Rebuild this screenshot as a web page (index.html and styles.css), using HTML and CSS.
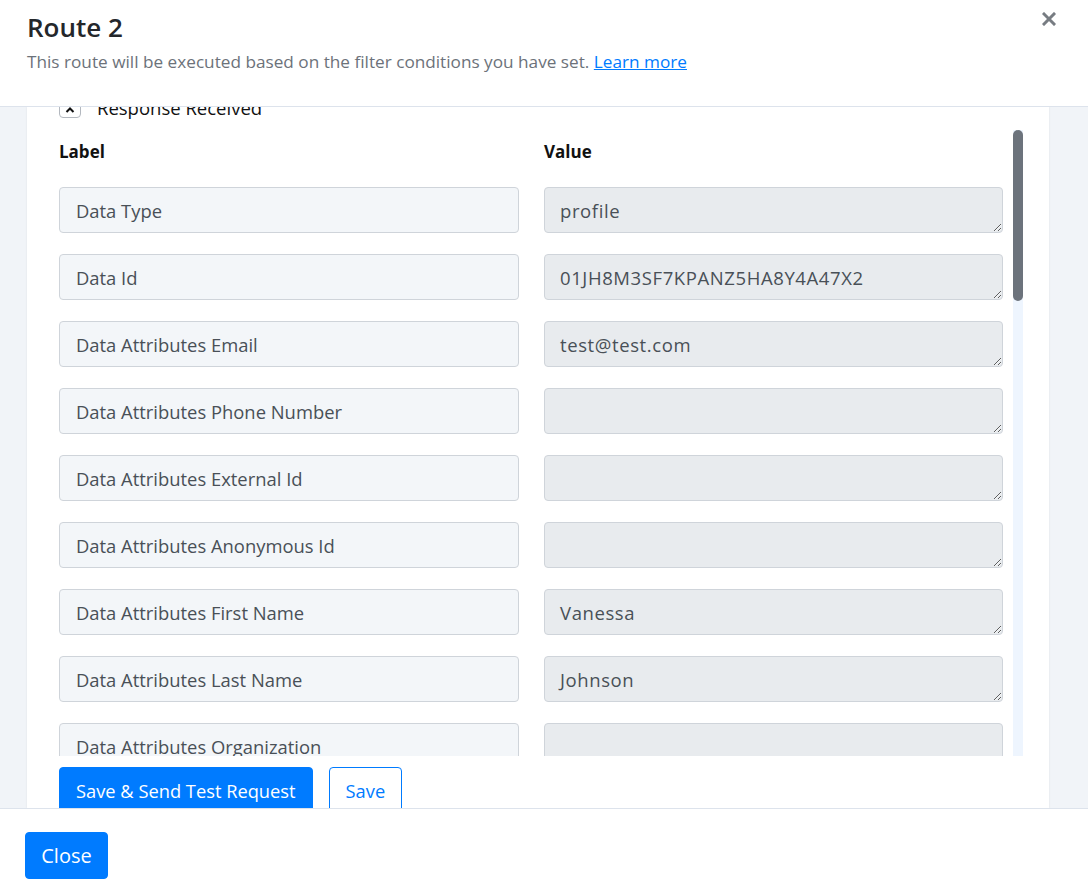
FILE: index.html
```html
<!DOCTYPE html>
<html lang="en">
  <head>
    <meta charset="UTF-8" />
    <meta name="viewport" content="width=device-width, initial-scale=1.0" />
    <title>Route 2</title>
    <link rel="stylesheet" href="styles.css">
  </head>
  <body>
    <div class="modal">
      <header class="modal-header">
        <div>
          <h1 class="modal-title">Route 2</h1>
          <p class="modal-subtitle">
            This route will be executed based on the filter conditions you have set.
            <a href="#">Learn more</a>
          </p>
        </div>
        <button class="close-x" aria-label="Close">
          <svg width="14" height="14" viewBox="0 0 14 14">
            <path d="M2 2 L12 12 M12 2 L2 12" stroke="#777c82" stroke-width="3" stroke-linecap="square" />
          </svg>
        </button>
      </header>

      <main class="modal-body">
        <section class="card">
          <div class="scroll-area">
            <div class="fields">
              <div class="toggle-row">
                <span class="toggle-box">
                  <svg width="12" height="12" viewBox="0 0 12 12">
                    <path d="M2.5 11 L6 7.5 L9.5 11" fill="none" stroke="#111" stroke-width="2" />
                  </svg>
                </span>
                <span>Response Received</span>
              </div>

              <div class="field-grid">
                <div class="col-head">Label</div>
                <div class="col-head">Value</div>

                <input class="label-input" type="text" value="Data Type" readonly />
                <textarea class="value-input" rows="1" readonly>profile</textarea>

                <input class="label-input" type="text" value="Data Id" readonly />
                <textarea class="value-input" rows="1" readonly>01JH8M3SF7KPANZ5HA8Y4A47X2</textarea>

                <input class="label-input" type="text" value="Data Attributes Email" readonly />
                <textarea class="value-input" rows="1" readonly>test@test.com</textarea>

                <input class="label-input" type="text" value="Data Attributes Phone Number" readonly />
                <textarea class="value-input" rows="1" readonly></textarea>

                <input class="label-input" type="text" value="Data Attributes External Id" readonly />
                <textarea class="value-input" rows="1" readonly></textarea>

                <input class="label-input" type="text" value="Data Attributes Anonymous Id" readonly />
                <textarea class="value-input" rows="1" readonly></textarea>

                <input class="label-input" type="text" value="Data Attributes First Name" readonly />
                <textarea class="value-input" rows="1" readonly>Vanessa</textarea>

                <input class="label-input" type="text" value="Data Attributes Last Name" readonly />
                <textarea class="value-input" rows="1" readonly>Johnson</textarea>

                <input class="label-input" type="text" value="Data Attributes Organization" readonly />
                <textarea class="value-input" rows="1" readonly></textarea>
              </div>
            </div>

            <!-- custom scrollbar for the field list -->
            <div class="scrollbar">
              <div class="scrollbar-thumb"></div>
            </div>
          </div>

          <div class="actions">
            <button class="btn btn-primary">Save &amp; Send Test Request</button>
            <button class="btn btn-outline">Save</button>
          </div>
        </section>
      </main>

      <footer class="modal-footer">
        <button class="btn btn-primary btn-close">Close</button>
      </footer>
    </div>
  </body>
</html>
```

FILE: styles.css
```css
body {
  margin: 0;
  padding: 0;
  font-family: "Open Sans", "Lato", sans-serif;
  background: #fff;
  color: #212529;
  overflow: hidden;
}
.modal {
  width: 1088px;
  height: 894px;
  display: flex;
  flex-direction: column;
}
/* Header */
.modal-header {
  height: 107px;
  flex-shrink: 0;
  box-sizing: border-box;
  padding: 9px 27px 0 27px;
  border-bottom: 1px solid #dde3ec;
  display: flex;
  justify-content: space-between;
  align-items: flex-start;
}
.modal-title {
  margin: 0;
  font-size: 26px;
  line-height: 36px;
  font-weight: 600;
  color: #24272b;
}
.modal-subtitle {
  margin: 5px 0 0;
  font-size: 17.2px;
  line-height: 24px;
  color: #6c727a;
}
.modal-subtitle a {
  color: #007bff;
  text-decoration: underline;
}
.close-x {
  background: none;
  border: none;
  padding: 0;
  margin: 3px 5px 0 0;
  width: 14px;
  height: 14px;
  cursor: pointer;
  line-height: 0;
}
/* Body */
.modal-body {
  flex: 1;
  background: #f1f4f8;
  padding: 0 39px 0 27px;
  overflow: hidden;
}
.card {
  background: #fff;
  height: 100%;
  box-sizing: border-box;
  padding: 0 26px 0 32px;
  box-shadow: 0 0 2px rgba(0, 0, 0, 0.08);
}
.scroll-area {
  height: 649px;
  display: flex;
  overflow: hidden;
}
.fields {
  width: 944px;
  margin-top: -11px;
}
.toggle-row {
  display: flex;
  align-items: center;
  gap: 16px;
  height: 22px;
  font-size: 18.5px;
  color: #111;
}
.toggle-box {
  width: 20px;
  height: 20px;
  border: 1px solid #b3b8bf;
  border-radius: 4px;
  display: flex;
  align-items: center;
  justify-content: center;
}
.field-grid {
  display: grid;
  grid-template-columns: 460px 459px;
  column-gap: 25px;
  row-gap: 21px;
  margin-top: 22px;
}
.col-head {
  font-weight: 700;
  font-size: 17px;
  line-height: 24px;
  color: #111;
  margin-bottom: 2px;
}
.label-input,
.value-input {
  box-sizing: border-box;
  width: 100%;
  height: 46px;
  margin: 0;
  border: 1px solid #cfd4da;
  border-radius: 4px;
  font-family: inherit;
  color: #495057;
  outline: none;
}
.label-input {
  background: #f3f6f9;
  padding: 0 16px;
  font-size: 18.4px;
}
.value-input {
  background: #e8ebee;
  padding: 11px 15px;
  font-size: 18.5px;
  letter-spacing: 0.6px;
  line-height: 24px;
  resize: vertical;
  overflow: hidden;
}
.scrollbar {
  width: 10px;
  margin: 23px 0 0 10px;
  background: #eef5fe;
}
.scrollbar-thumb {
  height: 171px;
  background: #6c737c;
  border-radius: 5px;
}
.actions {
  display: flex;
  gap: 16px;
  margin-top: 11px;
}
.btn {
  font-family: inherit;
  font-size: 18.3px;
  border-radius: 4px;
  height: 47px;
  padding: 0 16px;
  cursor: pointer;
}
.btn-primary {
  background: #007bff;
  color: #fff;
  border: 1px solid #007bff;
  font-weight: 500;
}
.btn-outline {
  background: #fff;
  color: #007bff;
  border: 1px solid #007bff;
}
/* Footer */
.modal-footer {
  height: 86px;
  flex-shrink: 0;
  border-top: 1px solid #dde3ec;
  padding: 23px 25px 0;
  box-sizing: border-box;
  background: #fff;
}
.btn-close {
  width: 83px;
  padding: 0;
  font-size: 20px;
}
```
